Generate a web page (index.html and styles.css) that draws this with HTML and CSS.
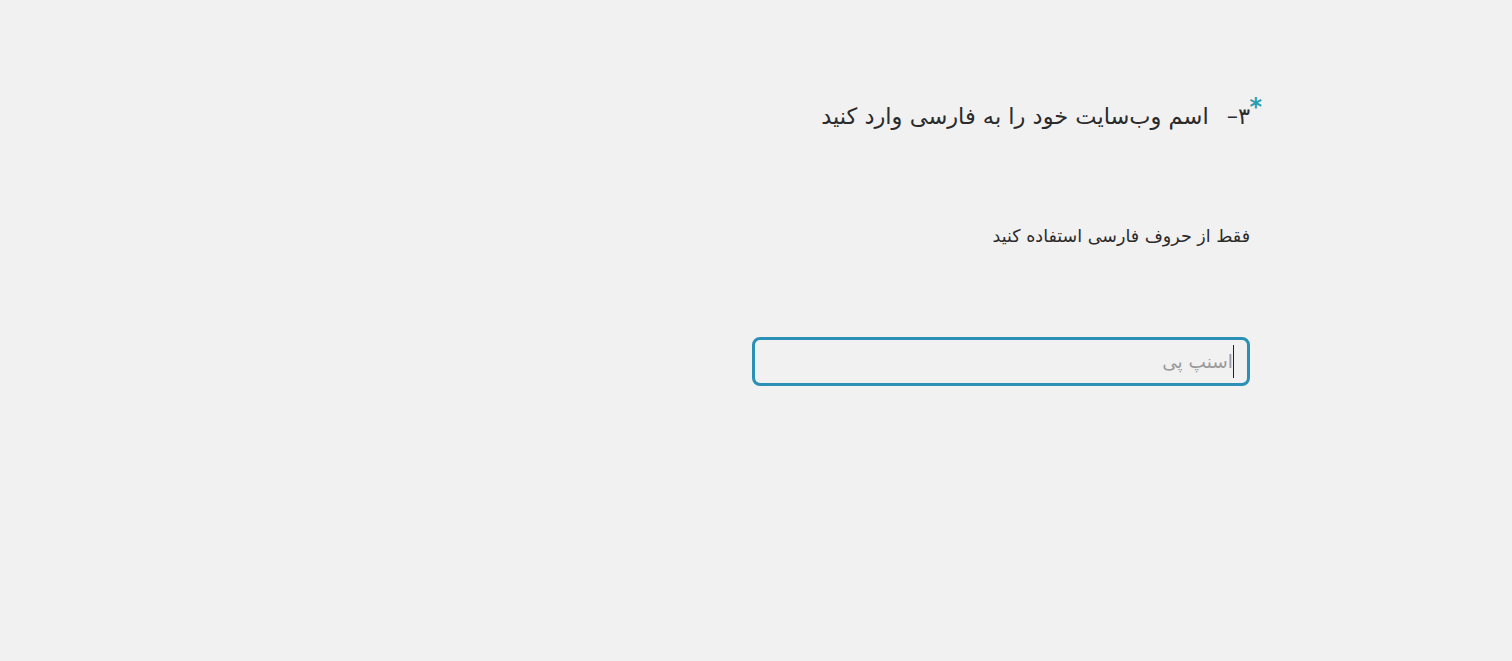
FILE: index.html
```html
<!DOCTYPE html>
<html lang="fa" dir="rtl">
<head>
<meta charset="utf-8">
<title>فرم</title>
<link rel="stylesheet" href="styles.css">
</head>
<body>
<main class="page">
  <section class="field">
    <h2 class="question"><span class="num">۳–</span><span class="qtext">اسم وب‌سایت خود را به فارسی وارد کنید</span><span class="req">*</span></h2>
    <p class="hint">فقط از حروف فارسی استفاده کنید</p>
    <div class="input">
      <span class="caret"></span>
      <span class="placeholder">اسنپ پی</span>
    </div>
  </section>
</main>
</body>
</html>
```
FILE: styles.css
```css
html, body {
  margin: 0;
  padding: 0;
  background: #f1f1f1;
}
body {
  font-family: "DejaVu Sans", "Noto Sans", sans-serif;
  color: #2b2b2b;
  direction: rtl;
}
.page {
  display: flex;
  justify-content: flex-start;
  padding-right: 262px;
  padding-top: 98px;
  min-height: 560px;
}
.field {
  width: 498px;
  display: flex;
  flex-direction: column;
}
.question {
  margin: 0;
  font-size: 22.5px;
  font-weight: normal;
  line-height: 36px;
  display: flex;
  align-items: flex-start;
  position: relative;
}
.num {
  margin-left: 18px;
}
.req {
  position: absolute;
  right: -12px;
  top: -2px;
  color: #2a9fb3;
  font-size: 24px;
  font-weight: bold;
  line-height: 22px;
}
.hint {
  margin: 0;
  margin-top: 87px;
  font-size: 17.5px;
  line-height: 30px;
}
.input {
  margin-top: 86px;
  height: 43px;
  border: 3px solid #2a90b5;
  border-radius: 8px;
  display: flex;
  align-items: center;
  padding-right: 13px;
}
.caret {
  width: 1px;
  height: 33px;
  background: #222;
}
.placeholder {
  color: #9a9a9a;
  font-size: 18.5px;
}
```
